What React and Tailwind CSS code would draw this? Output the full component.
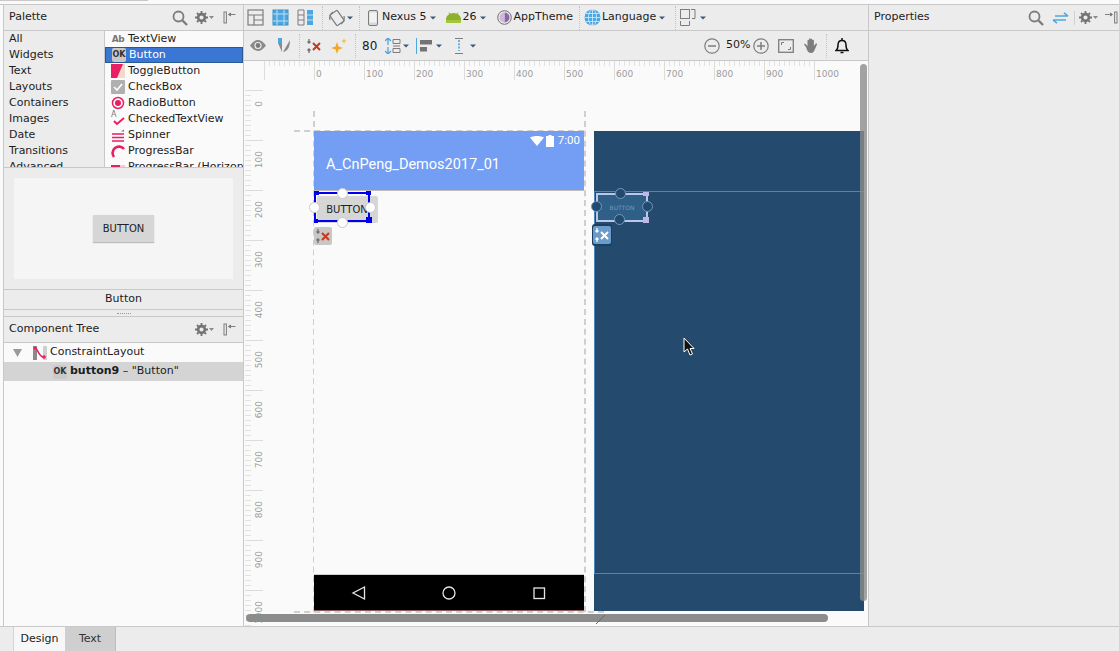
import React from "react";

const categories = ["All", "Widgets", "Text", "Layouts", "Containers", "Images", "Date", "Transitions", "Advanced"];

const hTicks = Array.from({ length: 111 }, (_, i) => i);
const vTicks = Array.from({ length: 112 }, (_, i) => i);
const hLabels = [0, 100, 200, 300, 400, 500, 600, 700, 800, 900, 1000];
const vLabels = [0, 100, 200, 300, 400, 500, 600, 700, 800, 900, 1000];

const Caret = ({ className = "" }) => (
  <svg width="6" height="4" viewBox="0 0 6 4" className={className}>
    <path d="M0 .5h6L3 3.5z" fill="#3c5a78" />
  </svg>
);

const Sep = ({ className = "" }) => (
  <div className={"w-px h-[24px] border-l border-dotted border-[#c4c4c4] " + className} />
);

const Search = () => (
  <svg width="16" height="16" viewBox="0 0 16 16" fill="none" stroke="#7d7d7d" strokeWidth="1.8">
    <circle cx="6.5" cy="6.5" r="5" />
    <path d="M10.5 10.5L15 15" strokeWidth="2.4" />
  </svg>
);

const Gear = () => (
  <span className="flex items-center gap-[1px]">
    <svg width="13" height="13" viewBox="0 0 13 13">
      <circle cx="6.5" cy="6.5" r="3.4" fill="none" stroke="#737373" strokeWidth="2.6" />
      <path d="M6.5 0v13M0 6.5h13M2 2l9 9M11 2l-9 9" stroke="#737373" strokeWidth="1.8" strokeDasharray="2.2 8.6 2.2 0" />
    </svg>
    <svg width="5" height="3" viewBox="0 0 5 3"><path d="M0 0h5L2.5 3z" fill="#8a8a8a" /></svg>
  </span>
);

const PinLeft = () => (
  <svg width="13" height="13" viewBox="0 0 13 13">
    <rect x="1" y="1" width="2.4" height="11" fill="none" stroke="#7d7d7d" />
    <path d="M5.5 3.5h7M5.5 3.5l2-1.5v3z" stroke="#7d7d7d" fill="#7d7d7d" strokeWidth="1" />
  </svg>
);

const PinRight = () => (
  <svg width="13" height="13" viewBox="0 0 13 13">
    <rect x="9.6" y="1" width="2.4" height="11" fill="none" stroke="#7d7d7d" />
    <path d="M0 3.5h7M7.5 3.5l-2-1.5v3z" stroke="#7d7d7d" fill="#7d7d7d" strokeWidth="1" />
  </svg>
);

const OkIcon = () => (
  <span className="w-[14px] h-[14px] rounded-[2px] bg-[#c9c9c9] flex items-center justify-center text-[8px] font-bold text-[#333]">
    OK
  </span>
);

const ErrorIcon = ({ light }) => {
  const c = light ? "#ffffff" : "#6e6e6e";
  const x = light ? "#ffffff" : "#c8391c";
  return (
    <svg width="16" height="16" viewBox="0 0 16 16" fill="none">
      <path d="M3 1v4M1.5 3.5L3 5l1.5-1.5M3 15v-4M1.5 12.500L3 11l1.500 1.500M1 8h0" stroke={c} strokeWidth="1.300" />
      <path d="M7 5l7 7M14 5l-7 7" stroke={x} strokeWidth="2" />
    </svg>
  );
};

const paletteRows = [
  {
    name: "TextView",
    icon: <span className="text-[9px] font-bold text-[#777] leading-none tracking-[-0.5px]">Ab</span>,
  },
  { name: "Button", icon: <OkIcon />, selected: true },
  {
    name: "ToggleButton",
    icon: (
      <svg width="14" height="14" viewBox="0 0 14 14">
        <rect width="14" height="14" fill="#f4d9c8" />
        <path d="M0 0h12L6 14H0z" fill="#e91e63" />
      </svg>
    ),
  },
  {
    name: "CheckBox",
    icon: (
      <svg width="14" height="14" viewBox="0 0 14 14">
        <rect width="14" height="14" rx="1" fill="#b0b0b0" />
        <path d="M3 7l3 3 5-6" stroke="#fff" strokeWidth="1.600" fill="none" />
      </svg>
    ),
  },
  {
    name: "RadioButton",
    icon: (
      <svg width="14" height="14" viewBox="0 0 14 14">
        <circle cx="7" cy="7" r="5.500" fill="none" stroke="#e91e63" strokeWidth="1.500" />
        <circle cx="7" cy="7" r="3" fill="#e91e63" />
      </svg>
    ),
  },
  {
    name: "CheckedTextView",
    icon: (
      <span className="relative w-[14px] h-[14px] block">
        <span className="absolute left-0 top-[-1px] text-[8px] text-[#777] leading-none">A</span>
        <svg width="14" height="14" viewBox="0 0 14 14" className="absolute left-0 top-0">
          <path d="M3 9l3 3 7-6" stroke="#e91e63" strokeWidth="2" fill="none" />
        </svg>
      </span>
    ),
  },
  {
    name: "Spinner",
    icon: (
      <svg width="14" height="14" viewBox="0 0 14 14">
        <path d="M1 6h12M1 9.500h12M1 13h12" stroke="#e91e63" strokeWidth="1.300" />
        <path d="M10 3.500l3-2v2z" fill="#777" />
      </svg>
    ),
  },
  {
    name: "ProgressBar",
    icon: (
      <svg width="14" height="14" viewBox="0 0 14 14">
        <path d="M3 13A6 6 0 1 1 13 5" fill="none" stroke="#e91e63" strokeWidth="2.600" />
      </svg>
    ),
  },
  {
    name: "ProgressBar (Horizontal)",
    icon: (
      <svg width="14" height="14" viewBox="0 0 14 14">
        <rect y="5" width="14" height="4" fill="#f8c9d8" />
        <rect y="5" width="9" height="4" fill="#e91e63" />
      </svg>
    ),
  },
];

const Handle = ({ className, dark }) => (
  <span
    className={
      "absolute w-[11px] h-[11px] rounded-full " +
      (dark ? "bg-[#234a6e] border border-[#6f9ac0] " : "bg-white border border-[#c9c9c9] ") +
      className
    }
  />
);

const App = () => {
  return (
    <div className="w-[1119px] h-[651px] overflow-hidden flex flex-col bg-[#ececec] text-[11px] text-[#1c1c1c] font-['DejaVu_Sans',sans-serif]">
      <div className="h-[5px] bg-[#fafafa] border-b border-[#c8c8c8] shrink-0">
        <div className="w-[148px] h-px bg-[#c8c8c8]" />
      </div>

      <div className="flex flex-1 min-h-0">
        {/* left column */}
        <div className="w-[244px] shrink-0 flex flex-col border-l-[4px] border-[#fafafa] border-r border-r-[#c8c8c8] relative">
          <div className="absolute left-[-1px] top-0 bottom-0 w-px bg-[#c8c8c8]" />
          <div className="h-[26px] flex items-center pl-[5px] border-b border-[#c8c8c8] shrink-0">
            <span>Palette</span>
            <span className="ml-auto flex items-center">
              <Search />
              <span className="ml-[7px]"><Gear /></span>
              <span className="ml-[9px] mr-[7px]"><PinLeft /></span>
            </span>
          </div>
          <div className="h-[137px] flex shrink-0 overflow-hidden border-b border-[#c8c8c8]">
            <div className="w-[101px] shrink-0 border-r border-[#c8c8c8] pl-[5px]">
              {categories.map((c) => (
                <div key={c} className="h-[16px] leading-[16px]">{c}</div>
              ))}
            </div>
            <div className="flex-1 bg-[#fafafa] min-w-0">
              {paletteRows.map((r) => (
                <div
                  key={r.name}
                  className={
                    "h-[16px] flex items-center whitespace-nowrap pl-[6px] " +
                    (r.selected ? "bg-[#3a76d4] text-white border border-[#2a5a96] pl-[5px]" : "")
                  }
                >
                  <span className="w-[14px] h-[14px] shrink-0 flex items-center justify-center">{r.icon}</span>
                  <span className="ml-[3px]">{r.name}</span>
                </div>
              ))}
            </div>
          </div>
          <div className="h-[122px] shrink-0 border-b border-[#c8c8c8] px-[10px] pt-[10px]">
            <div className="h-[101px] bg-[#f5f5f5] flex items-center justify-center">
              <div className="w-[61px] h-[27px] bg-[#d6d6d6] flex items-center justify-center text-[10px] text-[#222] shadow-[0_1px_1px_#bdbdbd]">
                BUTTON
              </div>
            </div>
          </div>
          <div className="h-[19px] shrink-0 flex items-center justify-center">Button</div>
          <div className="h-[8px] shrink-0 border-y border-[#c8c8c8] flex items-center justify-center">
            <span className="w-[14px] border-t border-dotted border-[#999]" />
          </div>
          <div className="h-[26px] shrink-0 flex items-center pl-[5px] border-b border-[#c8c8c8]">
            <span>Component Tree</span>
            <span className="ml-auto flex items-center">
              <Gear />
              <span className="ml-[9px] mr-[7px]"><PinLeft /></span>
            </span>
          </div>
          <div className="flex-1 bg-[#fafafa]">
            <div className="h-[19px] flex items-center pl-[9px]">
              <svg width="9" height="8" viewBox="0 0 9 8"><path d="M0 0h9L4.500 8z" fill="#9a9a9a" /></svg>
              <svg width="14" height="14" viewBox="0 0 14 14" className="ml-[11px]">
                <rect x="0" y="0" width="4" height="14" fill="#8a8a8a" />
                <rect x="10" y="0" width="4" height="14" fill="#cfcfcf" />
                <path d="M2 2c3 0 3 9 9 9" fill="none" stroke="#e91e63" strokeWidth="1.500" />
                <circle cx="2" cy="2" r="1.500" fill="#e91e63" />
                <circle cx="11" cy="11" r="1.800" fill="#e91e63" />
              </svg>
              <span className="ml-[3px]">ConstraintLayout</span>
            </div>
            <div className="h-[19px] flex items-center pl-[49px] bg-[#d4d4d4]">
              <OkIcon />
              <span className="ml-[3px] font-bold">button9</span>
              <span>&nbsp;– "Button"</span>
            </div>
          </div>
        </div>

        {/* center column */}
        <div className="w-[625px] shrink-0 flex flex-col border-r border-[#c8c8c8]">
          <div className="h-[26px] shrink-0 flex items-center pl-[3px] border-b border-[#c8c8c8]">
            <svg width="17" height="17" viewBox="0 0 17 17" fill="none" stroke="#7d7d7d" strokeWidth="1.200">
              <rect x="1" y="1" width="15" height="15" />
              <path d="M1 6h15M7 6v10M7 11h9" />
            </svg>
            <svg width="17" height="17" viewBox="0 0 17 17" className="ml-[8px]">
              <rect x="1" y="1" width="15" height="15" fill="#4ca6e0" stroke="#3d8fc4" />
              <path d="M1 5h15M1 12h15M5 1v15M12 1v15" stroke="#bfe0f5" strokeWidth="1" />
            </svg>
            <svg width="17" height="17" viewBox="0 0 17 17" className="ml-[8px]">
              <path d="M1 1h6v15H1zM1 6h6M1 11h6" fill="none" stroke="#7d7d7d" />
              <rect x="10" y="1" width="6" height="15" fill="#4ca6e0" />
              <path d="M10 6h6M10 11h6" stroke="#bfe0f5" />
            </svg>
            <Sep className="ml-[8px]" />
            <svg width="18" height="18" viewBox="0 0 18 18" fill="none" stroke="#7d7d7d" strokeWidth="1.200" className="ml-[5px]">
              <rect x="4.500" y="2.500" width="9" height="13" rx="1" transform="rotate(-35 9 9)" />
              <path d="M2 11a7.500 7.500 0 0 1 3-8M16 7a7.500 7.500 0 0 1-3 8" />
            </svg>
            <Caret className="ml-[1px]" />
            <Sep className="ml-[6px]" />
            <svg width="10" height="16" viewBox="0 0 10 16" className="ml-[8px]">
              <rect x=".5" y=".5" width="9" height="15" rx="1.500" fill="#d8d8d8" stroke="#7d7d7d" />
              <rect x="1.500" y="2.500" width="7" height="10" fill="#f2f2f2" />
            </svg>
            <span className="ml-[4px]">Nexus 5</span>
            <Caret className="ml-[3px]" />
            <svg width="15" height="11" viewBox="0 0 15 11" className="ml-[10px]">
              <path d="M0 10V7a7.500 6 0 0 1 15 0v3z" fill="#8fb02c" />
              <path d="M3 .5l2 3M12 .5l-2 3" stroke="#8fb02c" />
              <rect y="8" width="15" height="3" fill="#a4c639" />
            </svg>
            <span className="ml-[2px]">26</span>
            <Caret className="ml-[3px]" />
            <svg width="15" height="15" viewBox="0 0 15 15" className="ml-[11px]">
              <circle cx="7.500" cy="7.500" r="6.800" fill="#e8e8e8" stroke="#6e6e6e" />
              <path d="M7.500 2.500a5 5 0 0 1 0 10z" fill="#8e63a8" />
              <path d="M7.500 2.500a5 5 0 0 0 0 10z" fill="#cdb8db" />
            </svg>
            <span className="ml-[2px]">AppTheme</span>
            <Sep className="ml-[6px]" />
            <svg width="17" height="17" viewBox="0 0 17 17" className="ml-[4px]">
              <circle cx="8.500" cy="8.500" r="8" fill="#4ca6e0" />
              <g fill="none" stroke="#d9eefa" strokeWidth=".8">
                <ellipse cx="8.500" cy="8.500" rx="4" ry="8" />
                <path d="M8.500 .5v16M.5 8.500h16M2 4.500h13M2 12.500h13" />
              </g>
            </svg>
            <span className="ml-[1px]">Language</span>
            <Caret className="ml-[3px]" />
            <Sep className="ml-[10px]" />
            <svg width="17" height="17" viewBox="0 0 17 17" fill="none" stroke="#7d7d7d" className="ml-[4px]">
              <rect x=".5" y=".5" width="9" height="9" />
              <path d="M11 .5h4v9h-3M.5 12v4.500h9V12" />
            </svg>
            <Caret className="ml-[3px]" />
          </div>

          <div className="h-[30px] shrink-0 flex items-center border-b border-[#c8c8c8]">
            <svg width="16" height="11" viewBox="0 0 16 11" className="ml-[6px]">
              <path d="M0 5.500C3 1.500 5.500 0 8 0s5 1.500 8 5.500C13 9.500 10.500 11 8 11S3 9.500 0 5.500z" fill="#8a8a8a" />
              <circle cx="8" cy="5.500" r="3.600" fill="#ececec" />
              <circle cx="8" cy="5.500" r="2.400" fill="#7a7a7a" />
            </svg>
            <svg width="13" height="15" viewBox="0 0 13 15" className="ml-[11px]">
              <rect x="1" y="0" width="4" height="5" fill="#4ca6e0" />
              <path d="M1 5h4v9zM13 2L6 14c5-1 7-5 7-12z" fill="#8a8a8a" />
            </svg>
            <Sep className="ml-[9px]" />
            <span className="ml-[6px]"><ErrorIcon /></span>
            <svg width="16" height="16" viewBox="0 0 16 16" className="ml-[9px]">
              <path d="M6 4l1.500 4.500L12 10l-4.500 1.500L6 16l-1.500-4.500L0 10l4.500-1.500z" fill="#f5a623" />
              <path d="M13 0l.8 2.200L16 3l-2.200.8L13 6l-.8-2.200L10 3l2.200-.8z" fill="#f5c04a" />
            </svg>
            <Sep className="ml-[8px]" />
            <span className="ml-[6px] text-[12px] w-[16px]">80</span>
            <svg width="16" height="16" viewBox="0 0 16 16" className="ml-[7px]">
              <path d="M3 0v7M0 3l3-3 3 3M3 9v7M0 13l3 3 3-3" stroke="#4ca6e0" strokeWidth="1.300" fill="none" />
              <path d="M8 1.500h7v4H8zM8 10.500h7v4H8z" fill="none" stroke="#7d7d7d" />
              <path d="M8 8h7" stroke="#7d7d7d" />
            </svg>
            <Caret className="ml-[2px]" />
            <div className="w-px h-[16px] bg-[#4ca6e0] ml-[7px]" />
            <svg width="14" height="13" viewBox="0 0 14 13" className="ml-[3px]">
              <rect x="0" y="1" width="12" height="4.500" fill="#737373" />
              <rect x="0" y="8" width="7" height="4.500" fill="#737373" />
            </svg>
            <Caret className="ml-[2px]" />
            <svg width="10" height="16" viewBox="0 0 10 16" className="ml-[12px]">
              <path d="M1 .5h8M1 15.500h8" stroke="#7d7d7d" />
              <path d="M5 2v11" stroke="#4ca6e0" strokeDasharray="2 1.300" strokeWidth="1.600" />
            </svg>
            <Caret className="ml-[6px]" />

            <div className="ml-auto flex items-center mr-[19px]">
              <svg width="16" height="16" viewBox="0 0 16 16" fill="none" stroke="#7d7d7d" strokeWidth="1.200">
                <circle cx="8" cy="8" r="7.200" />
                <path d="M4 8h8" strokeWidth="1.500" />
              </svg>
              <span className="ml-[6px] w-[21px]">50%</span>
              <svg width="16" height="16" viewBox="0 0 16 16" fill="none" stroke="#7d7d7d" strokeWidth="1.200" className="ml-[6px]">
                <circle cx="8" cy="8" r="7.200" />
                <path d="M4 8h8M8 4v8" strokeWidth="1.500" />
              </svg>
              <svg width="16" height="14" viewBox="0 0 16 14" fill="none" stroke="#7d7d7d" className="ml-[9px]">
                <rect x=".7" y=".7" width="14.600" height="12.600" strokeWidth="1.300" />
                <path d="M3.500 6V3.500H6M12.500 8v2.500H10" />
              </svg>
              <svg width="15" height="15" viewBox="0 0 15 15" className="ml-[10px]">
                <path d="M2 9L0 6.500l1-1L3.500 8V2.500a.8.8 0 0 1 1.600 0V1a.8.8 0 0 1 1.600 0v.5a.8.8 0 0 1 1.600 0v1a.8.8 0 0 1 1.600 0V8l1.500-2c1-1 2-.3 1.500.7L11 11c-.8 2-1.500 4-4 4-3 0-4-3-5-6z" fill="#7d7d7d" />
              </svg>
              <Sep className="ml-[7px]" />
              <svg width="14" height="16" viewBox="0 0 14 16" fill="none" stroke="#111" strokeWidth="1.500" className="ml-[8px]">
                <path d="M1 12.500c1.500-1 2-2 2-5.500 0-2.500 1.500-4.500 4-4.500s4 2 4 4.500c0 3.500.5 4.500 2 5.500z" />
                <path d="M7 0v2M5.500 14.500h3" />
              </svg>
            </div>
          </div>

          {/* design surface */}
          <div className="relative flex-1 bg-[#fafafa] overflow-hidden">
            <div className="absolute left-0 top-0 w-[619px] h-[19px] overflow-hidden">
              {hTicks.map((i) => (
                <span
                  key={i}
                  className={"absolute top-0 w-px " + (i % 10 === 0 ? "h-[19px] bg-[#dcdcdc]" : "h-[5px] bg-[#e2e2e2]")}
                  style={{ left: 20 + i * 5 }}
                />
              ))}
              {hLabels.map((n, i) => (
                <span key={n} className="absolute top-[8px] text-[9px] leading-[11px] text-[#9c9c9c]" style={{ left: 72 + i * 50 }}>
                  {n}
                </span>
              ))}
            </div>
            <div className="absolute left-0 top-[20px] w-[20px] bottom-0 overflow-hidden">
              {vTicks.map((i) => (
                <span
                  key={i}
                  className={"absolute left-[1px] h-px " + (i % 10 === 0 ? "w-[18px] bg-[#dcdcdc]" : "w-[6px] bg-[#e2e2e2]")}
                  style={{ top: 9 + i * 5 }}
                />
              ))}
              {vLabels.map((n, i) => (
                <span
                  key={n}
                  className="absolute w-[30px] left-0 text-right text-[9px] leading-[11px] text-[#9c9c9c] -rotate-90 origin-top-left"
                  style={{ top: 50 + i * 50, left: 10 }}
                >
                  {n}
                </span>
              ))}
            </div>

            {/* dashed device bounds */}
            <div className="absolute left-[69px] top-[50px] h-[501px] border-l-2 border-dashed border-[#cfcfcf]" />
            <div className="absolute left-[340px] top-[50px] h-[501px] border-l-2 border-dashed border-[#cfcfcf]" />
            <div className="absolute left-[50px] top-[69px] w-[290px] border-t-2 border-dashed border-[#cfcfcf]" />
            <div className="absolute left-[50px] top-[550px] w-[310px] border-t-2 border-dashed border-[#cfcfcf]" />

            {/* design device */}
            <div className="absolute left-[70px] top-[70px] w-[270px] h-[480px] bg-[#fafafa] flex flex-col">
              <div className="h-[60px] bg-[#739ef3] text-white border-b border-[#bdbdbd] shrink-0 font-['Roboto',sans-serif]">
                <div className="h-[20px] flex items-center justify-end pr-[4px] text-[11.500px]">
                  <svg width="14" height="10" viewBox="0 0 14 10"><path d="M0 1.500C4 -.5 10 -.5 14 1.500L7 10z" fill="#fff" /></svg>
                  <svg width="8" height="12" viewBox="0 0 8 12" className="ml-[2px]"><path d="M2.500 0h3v1H8v11H0V1h2.500z" fill="#fff" /></svg>
                  <span className="ml-[4px]">7:00</span>
                </div>
                <div className="pl-[12px] mt-[3px] text-[14.500px] leading-[22px]">A_CnPeng_Demos2017_01</div>
              </div>
              <div className="relative flex-1 min-h-0">
                <div className="absolute left-[3px] top-[5px] w-[61px] h-[27px] bg-[#d6d6d6] rounded-[2px] flex items-center justify-center text-[10px] text-[#222] pr-[1px]">
                  BUTTON
                </div>
                <div className="absolute left-0 top-[1px] w-[56px] h-[30px] border-2 border-[#0000ee]" />
                <span className="absolute left-0 top-0 w-[5px] h-[4px] bg-[#0000ee]" />
                <span className="absolute left-[52px] top-0 w-[5px] h-[4px] bg-[#0000ee]" />
                <span className="absolute left-0 top-[28px] w-[4px] h-[4px] bg-[#0000ee]" />
                <span className="absolute left-[52px] top-[26px] w-[6px] h-[6px] bg-[#0000ee]" />
                <Handle className="left-[23px] top-[-3px]" />
                <Handle className="left-[-5px] top-[11px]" />
                <Handle className="left-[51px] top-[11px]" />
                <Handle className="left-[23px] top-[26px]" />
                <div className="absolute left-0 top-[36px] w-[18px] h-[18px] rounded-[2px] bg-[#c7c7c7] flex items-center justify-center">
                  <ErrorIcon />
                </div>
              </div>
              <div className="h-[37px] bg-black border-t border-[#cfcfcf] flex items-center shrink-0 border-b border-b-[#8a5a5a]">
                <svg width="270" height="16" viewBox="0 0 270 16" fill="none" stroke="#e6e6e6" strokeWidth="1.300">
                  <path d="M50.500 2v12L39 8z" />
                  <circle cx="135" cy="8" r="6" />
                  <rect x="220" y="3" width="10.500" height="10.500" />
                </svg>
              </div>
            </div>

            {/* blueprint */}
            <div className="absolute left-[350px] top-[70px] w-[270px] h-[480px] bg-[#244b6e]">
              <div className="absolute left-0 right-0 top-[60px] h-[383px] border-y border-l border-[#4f86b8]" />
              <div className="absolute left-[2px] top-[62px] w-[52px] h-[29px] bg-[#2f5f87] border-2 border-[#bcc6e8] flex items-center justify-center text-[6px] text-[#7299bb]">
                BUTTON
              </div>
              <span className="absolute left-[49px] top-[61px] w-[6px] h-[4px] bg-[#bcb8ea]" />
              <span className="absolute left-[49px] top-[86px] w-[6px] h-[6px] bg-[#bcb8ea]" />
              <Handle dark className="left-[21px] top-[57px]" />
              <Handle dark className="left-[-3px] top-[70px]" />
              <Handle dark className="left-[48px] top-[70px]" />
              <Handle dark className="left-[20px] top-[83px]" />
              <div className="absolute left-[-2px] top-[93px] w-[20px] h-[22px] rounded-[3px] bg-[#1d3f5f] flex items-center justify-center">
                <span className="w-[18px] h-[18px] rounded-[2px] bg-[#6a9ccb] flex items-center justify-center">
                  <ErrorIcon light />
                </span>
              </div>
            </div>

            {/* mouse pointer */}
            <svg width="12" height="19" viewBox="0 0 12 19" className="absolute left-[439px] top-[276px]">
              <path d="M1 1v14l3.500-3 2.500 6 2.500-1-2.500-5.500H11z" fill="#111" stroke="#fff" strokeWidth="1" />
            </svg>

            {/* scrollbars */}
            <div className="absolute left-[616px] top-[3px] w-[7px] h-[537px] rounded-[4px] bg-[#8c8c8c]/80" />
            <div className="absolute left-[2px] top-[553px] w-[582px] h-[8px] rounded-[4px] bg-[#8c8c8c]" />
            <svg width="10" height="9" viewBox="0 0 10 9" className="absolute left-[352px] top-[554px]">
              <path d="M0 9l9-9" stroke="#666" />
            </svg>
          </div>
        </div>

        {/* right column */}
        <div className="flex-1 min-w-0 flex flex-col">
          <div className="h-[26px] shrink-0 flex items-center pl-[5px] border-b border-[#c8c8c8]">
            <span>Properties</span>
            <span className="ml-auto flex items-center">
              <Search />
              <svg width="17" height="12" viewBox="0 0 17 12" fill="none" stroke="#4ca6e0" strokeWidth="1.600" className="ml-[8px]">
                <path d="M3 4h13M12 0.800L16 4" />
                <path d="M14 8H1M5 11.200L1 8" />
              </svg>
              <div className="w-px h-[14px] bg-[#d0d0d0] ml-[5px]" />
              <span className="ml-[4px]"><Gear /></span>
              <span className="ml-[7px] mr-[1px]"><PinRight /></span>
            </span>
          </div>
          <div className="flex-1" />
        </div>
      </div>

      {/* bottom tabs */}
      <div className="h-[25px] shrink-0 border-t border-[#c8c8c8] flex pl-[4px]">
        <div className="w-[10px] border-r border-[#d4d4d4]" />
        <div className="w-[51px] bg-[#f7f7f7] flex items-center justify-center">Design</div>
        <div className="w-[51px] bg-[#cfcfcf] border-r border-[#bdbdbd] flex items-center justify-center text-[#333]">Text</div>
      </div>
    </div>
  );
};

export default App;
